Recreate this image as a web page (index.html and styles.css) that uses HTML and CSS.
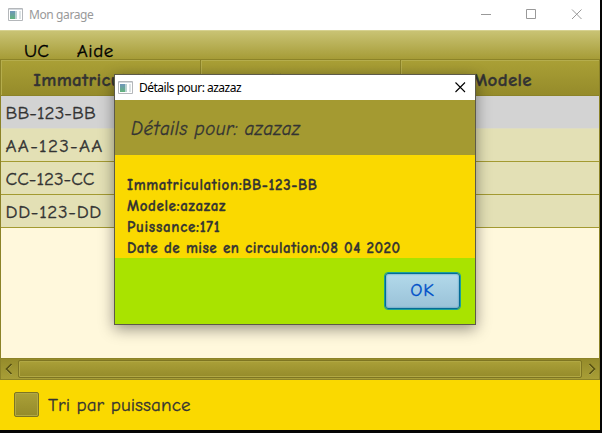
FILE: index.html
```html
<!DOCTYPE html>
<html lang="fr">
<head>
<meta charset="utf-8">
<title>Mon garage</title>
<link rel="stylesheet" href="styles.css">
</head>
<body>
<main class="window">
  <header class="titlebar">
    <svg class="app-icon" width="15" height="13" viewBox="0 0 15 13"><defs><linearGradient id="g" x2="0" y2="1"><stop stop-color="#6f96bb"/><stop offset="1" stop-color="#62b37b"/></linearGradient></defs><path fill="#fff" stroke="#b4b7ba" d="M.5.5h14v12H.5z"/><path fill="#d5dadf" d="M1 1h13v1H1z"/><path fill="url(#g)" d="M2 3h5v8H2z"/><path fill="#b9d2d0" d="M7 3h2v8H7z"/><path fill="#dce3e5" d="M11 3h2v8h-2z"/></svg>
    <span class="caption caption-main">Mon garage</span>
    <svg class="controls" width="102" height="12" viewBox="0 0 102 12" fill="none" stroke="#999"><path d="M0 5.5h10M45.500 .5h9v9h-9zM91 .500l9.500 9.500M100.500 .500l-9.500 9.500"/></svg>
  </header>
  <nav class="menubar"><span class="menu-uc">UC</span><span class="menu-help">Aide</span></nav>
  <section class="table">
    <div class="columns">
      <div class="column"><span class="h-imm">Immatriculation</span></div>
      <div class="column"><span class="h-mar">Marque</span></div>
      <div class="column"><span class="h-mod">Modele</span></div>
    </div>
    <div class="row selected"><span class="r-bb">BB-123-BB</span></div>
    <div class="row"><span class="r-aa">AA-123-AA</span></div>
    <div class="row"><span class="r-cc">CC-123-CC</span></div>
    <div class="row"><span class="r-dd">DD-123-DD</span></div>
  </section>
  <div class="scrollbar">
    <svg width="17" height="22" fill="none"><path stroke="#c5c06f" d="M10.500 7l-5 5 5 5"/><path stroke="#565012" stroke-width="1.600" d="M10.500 6l-5 5 5 5"/></svg>
    <div class="thumb"></div>
    <svg width="17" height="22" fill="none"><path stroke="#c5c06f" d="M7.500 7l5 5-5 5"/><path stroke="#565012" stroke-width="1.600" d="M7.500 6l5 5-5 5"/></svg>
  </div>
  <footer class="footer"><span class="checkbox"></span><span class="tri">Tri par puissance</span></footer>
</main>
<div class="dialog">
  <header class="dialog-title">
    <svg class="app-icon" width="15" height="13" viewBox="0 0 15 13"><path fill="#fff" stroke="#b4b7ba" d="M.5.5h14v12H.5z"/><path fill="#d5dadf" d="M1 1h13v1H1z"/><path fill="url(#g)" d="M2 3h5v8H2z"/><path fill="#b9d2d0" d="M7 3h2v8H7z"/><path fill="#dce3e5" d="M11 3h2v8h-2z"/></svg>
    <span class="caption caption-dialog">Détails pour: azazaz</span>
    <svg class="close" width="11" height="11" fill="none" stroke="#000" stroke-width="1.100"><path d="M.500 .500l9.500 9.500M10 .500l-9.500 9.500"/></svg>
  </header>
  <div class="dialog-header"><span class="dh">Détails pour: azazaz</span></div>
  <div class="details">
    <div><span class="d1">Immatriculation:BB-123-BB</span></div>
    <div><span class="d2">Modele:azazaz</span></div>
    <div><span class="d3">Puissance:171</span></div>
    <div><span class="d4">Date de mise en circulation:08 04 2020</span></div>
  </div>
  <div class="actions"><button class="ok">OK</button></div>
</div>
</body>
</html>
```
FILE: styles.css
```css
* { box-sizing: border-box; }
body {
  margin: 0;
  width: 602px;
  height: 433px;
  overflow: hidden;
  background: #050505;
  color: #333;
  font: 19px/24px "Comic Sans MS", "Comic Neue", Lato, sans-serif;
  -webkit-text-stroke: .3px;
  font-kerning: none;
  white-space: nowrap;
}
.window { width: 600px; height: 430px; display: flex; flex-direction: column; background: #fad900; }
.titlebar { height: 30px; display: flex; align-items: center; padding: 0 17px 1px 8px; background: #fff; }
.app-icon { flex: none; }
.caption { font: 12px/16px "Segoe UI", "Noto Sans", sans-serif; -webkit-text-stroke: 0; }
.caption-main { margin-left: 6px; color: #999; letter-spacing: -.4px; }
.controls { margin-left: auto; }
.menubar {
  height: 29px;
  display: flex;
  gap: 28px;
  padding: 8px 0 0 24px;
  border-top: 1px solid #d7d291;
  background: linear-gradient(#c9c374, #a69c37);
  color: #000;
}
.menu-help { letter-spacing: .5px; }
.table { height: 299px; border: solid #8c8328; border-width: 0 1px; background: #fff8dc; }
.columns { height: 37px; display: grid; grid-template-columns: 201px 200px 1fr; margin: 0 -1px; }
.column {
  display: flex;
  align-items: center;
  justify-content: center;
  padding-top: 5px;
  border: 1px solid #8c8328;
  border-left-width: 0;
  box-shadow: inset 1px 1px #b5ad4d;
  background: linear-gradient(#aaa036, #958b2a);
  font-weight: 900;
}
.column:first-child { border-left-width: 1px; }
.column:last-child { padding-left: 4px; }
.h-imm { letter-spacing: .3px; }
.h-mar, .h-mod { letter-spacing: .3px; }
.row { height: 33px; padding: 5px 0 0 4.500px; border-bottom: 1px solid #a39a31; background: #e3e0b5; }
.row.selected { background: #d3d3d3; border-color: #dedcc3; }
.r-bb { letter-spacing: .1px; }
.r-aa { letter-spacing: 1.300px; }
.r-dd { letter-spacing: .7px; }
.scrollbar {
  height: 22px;
  display: flex;
  align-items: center;
  border: 1px solid #8c8328;
  background: linear-gradient(#958b2a, #a89e37);
}
.thumb {
  flex: 1;
  height: 18px;
  border: 1px solid #7e7522;
  border-radius: 2px;
  box-shadow: inset 0 0 0 1px #b1a844;
  background: linear-gradient(#aaa038, #958b2a);
}
.footer { flex: 1; display: flex; align-items: center; padding-left: 14px; gap: 9px; }
.tri { letter-spacing: .1px; }
.checkbox {
  width: 25px;
  height: 25px;
  margin-top: -2px;
  border: 1px solid #7e7522;
  border-radius: 2px;
  box-shadow: inset 0 0 0 1px #b1a844;
  background: linear-gradient(#aaa038, #958b2a);
}
.dialog {
  position: absolute;
  left: 114px;
  top: 74px;
  width: 362px;
  height: 251px;
  border: 1px solid #5d5a49;
  background: #fad900;
  box-shadow: 0 4px 14px rgba(0, 0, 0, .42);
}
.dialog-title { height: 25px; display: flex; align-items: center; padding: 0 9px 0 3px; background: #fff; color: #000; }
.caption-dialog { margin-left: 6px; letter-spacing: -.5px; }
.close { margin-left: auto; }
.dialog-header { height: 55px; display: flex; align-items: center; padding: 3px 0 0 16px; background: #a49a31; font-style: italic; }
.dh { letter-spacing: .45px; }
.details { height: 103px; padding: 20px 0 0 12px; font-size: 15px; line-height: 21px; font-weight: 900; }
.d1, .d2 { letter-spacing: .6px; }
.d3 { letter-spacing: .7px; }
.d4 { letter-spacing: .47px; }
.actions { height: 66px; display: flex; justify-content: flex-end; align-items: center; padding-right: 15px; background: #a9e300; }
.ok {
  width: 75px;
  height: 36px;
  padding: 0 0 2px;
  border: 1px solid #046b94;
  border-radius: 3px;
  outline: 1px solid #1c9f98;
  background: linear-gradient(#b2d9ea, #9ac2d8);
  box-shadow: inset 0 0 2px #2b89b2;
  color: #0050c8;
  font: inherit;
  letter-spacing: .8px;
}
```
